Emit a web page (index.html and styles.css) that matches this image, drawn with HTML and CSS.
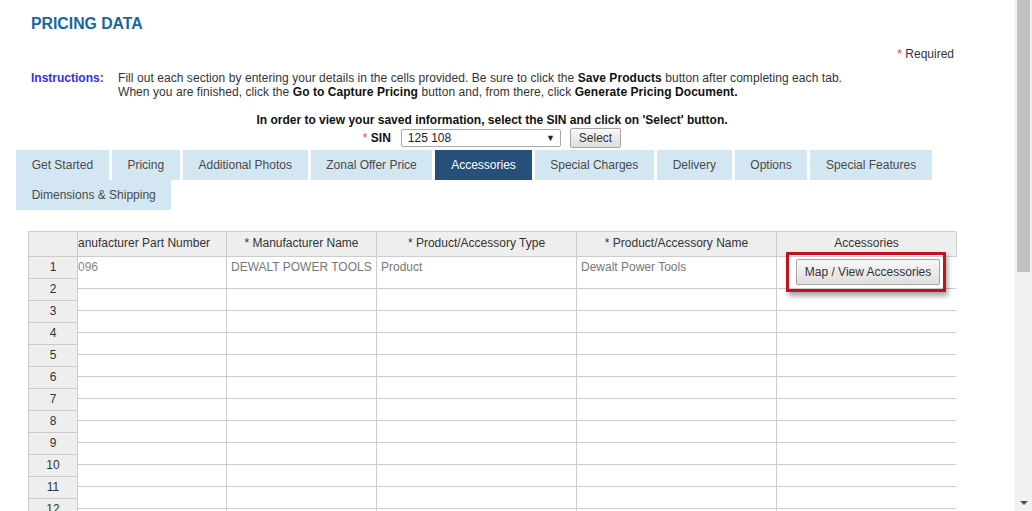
FILE: index.html
```html
<!DOCTYPE html>
<html lang="en">
<head>
<meta charset="utf-8">
<title>Pricing Data</title>
<link rel="stylesheet" href="styles.css">
</head>
<body>
<div class="page">
  <h1 class="title">PRICING DATA</h1>
  <p class="required"><span class="req">*</span> Required</p>
  <div class="instructions">
    <span class="label">Instructions:</span>
    <div class="text">Fill out each section by entering your details in the cells provided. Be sure to click the <b>Save Products</b> button after completing each tab.<br>When you are finished, click the <b>Go to Capture Pricing</b> button and, from there, click <b>Generate Pricing Document.</b></div>
  </div>
  <p class="lookup-note">In order to view your saved information, select the SIN and click on 'Select' button.</p>
  <div class="sin-row">
    <span class="sin-label"><span class="req">*</span> <b>SIN</b></span>
    <div class="select"><span>125 108</span><span class="caret">▼</span></div>
    <button class="btn select-btn" type="button">Select</button>
  </div>
  <nav class="tabs">
    <a class="tab">Get Started</a>
    <a class="tab">Pricing</a>
    <a class="tab">Additional Photos</a>
    <a class="tab">Zonal Offer Price</a>
    <a class="tab active">Accessories</a>
    <a class="tab">Special Charges</a>
    <a class="tab">Delivery</a>
    <a class="tab">Options</a>
    <a class="tab">Special Features</a>
    <a class="tab">Dimensions &amp; Shipping</a>
  </nav>
  <div class="sheet">
    <div class="rowhead">
      <div class="rh-cell corner"></div>
      <div class="rh-cell">1</div>
      <div class="rh-cell">2</div>
      <div class="rh-cell">3</div>
      <div class="rh-cell">4</div>
      <div class="rh-cell">5</div>
      <div class="rh-cell">6</div>
      <div class="rh-cell">7</div>
      <div class="rh-cell">8</div>
      <div class="rh-cell">9</div>
      <div class="rh-cell">10</div>
      <div class="rh-cell">11</div>
      <div class="rh-cell">12</div>
    </div>
    <div class="grid">
      <div class="hd clip"><span class="shift">* Manufacturer Part Number</span></div>
      <div class="hd">* Manufacturer Name</div>
      <div class="hd">* Product/Accessory Type</div>
      <div class="hd">* Product/Accessory Name</div>
      <div class="hd">Accessories</div>

      <div class="cd">096</div>
      <div class="cd">DEWALT POWER TOOLS</div>
      <div class="cd">Product</div>
      <div class="cd">Dewalt Power Tools</div>
      <div class="cd last action">
        <button class="btn map-btn" type="button">Map / View Accessories</button>
        <span class="highlight"></span>
      </div>

      <div class="cd"></div><div class="cd"></div><div class="cd"></div><div class="cd"></div><div class="cd last"></div>
      <div class="cd"></div><div class="cd"></div><div class="cd"></div><div class="cd"></div><div class="cd last"></div>
      <div class="cd"></div><div class="cd"></div><div class="cd"></div><div class="cd"></div><div class="cd last"></div>
      <div class="cd"></div><div class="cd"></div><div class="cd"></div><div class="cd"></div><div class="cd last"></div>
      <div class="cd"></div><div class="cd"></div><div class="cd"></div><div class="cd"></div><div class="cd last"></div>
      <div class="cd"></div><div class="cd"></div><div class="cd"></div><div class="cd"></div><div class="cd last"></div>
      <div class="cd"></div><div class="cd"></div><div class="cd"></div><div class="cd"></div><div class="cd last"></div>
      <div class="cd"></div><div class="cd"></div><div class="cd"></div><div class="cd"></div><div class="cd last"></div>
      <div class="cd"></div><div class="cd"></div><div class="cd"></div><div class="cd"></div><div class="cd last"></div>
      <div class="cd"></div><div class="cd"></div><div class="cd"></div><div class="cd"></div><div class="cd last"></div>
      <div class="cd"></div><div class="cd"></div><div class="cd"></div><div class="cd"></div><div class="cd last"></div>
    </div>
  </div>
</div>
<div class="scrollbar">
  <div class="thumb"></div>
  <div class="arrow-down"></div>
</div>
</body>
</html>
```

FILE: styles.css
```css
html, body {
  margin: 0;
  padding: 0;
  overflow: hidden;
  background: #fff;
}

body {
  font-family: "Liberation Sans", Arial, sans-serif;
  font-size: 12px;
  color: #333;
}

.page {
  width: 952px;
  margin-left: 16px;
}

.title {
  margin: 0 0 0 15px;
  padding-top: 14px;
  font-size: 15.8px;
  line-height: 20px;
  font-weight: bold;
  color: #17679f;
}

.required {
  margin: 13px 14px 0 0;
  text-align: right;
  line-height: 14px;
  color: #333;
}

.req {
  color: #e0393e;
}

.instructions {
  display: flex;
  margin: 10px 0 0 15px;
  line-height: 14px;
}

.instructions .label {
  width: 87px;
  flex: none;
  font-weight: bold;
  color: #3030ee;
}

.instructions .text {
  color: #333;
  letter-spacing: 0.06px;
}

.instructions b {
  color: #111;
}

.lookup-note {
  margin: 14px 0 0;
  text-align: center;
  font-weight: bold;
  line-height: 14px;
  color: #111;
}

.sin-row {
  display: flex;
  justify-content: center;
  align-items: center;
  height: 22px;
  margin-bottom: 1px;
}

.sin-label {
  margin-right: 10px;
  color: #111;
}

.select {
  display: flex;
  justify-content: space-between;
  align-items: center;
  box-sizing: border-box;
  width: 160px;
  height: 18px;
  padding: 0 5px 0 6px;
  border: 1px solid #a9a9a9;
  border-radius: 2px;
  background: #fff;
  color: #222;
  font-size: 12px;
}

.select .caret {
  font-size: 9px;
  color: #222;
}

.btn {
  box-sizing: border-box;
  font-family: "Liberation Sans", Arial, sans-serif;
  font-size: 12px;
  color: #333;
  border: 1px solid #a5a5a5;
  border-radius: 2px;
  background: linear-gradient(#f8f8f8, #dedede);
  cursor: pointer;
}

.select-btn {
  margin-left: 9px;
  height: 20px;
  padding: 0 8px;
}

.tabs {
  display: flex;
  flex-wrap: wrap;
  column-gap: 3px;
}

.tab {
  display: block;
  height: 30px;
  line-height: 30px;
  padding: 0 15.7px;
  background: #d3e7f3;
  color: #4a4a4a;
  font-size: 12px;
  white-space: nowrap;
}

.tab.active {
  background: #24507a;
  color: #fff;
}

.sheet {
  display: flex;
  align-items: flex-start;
  margin: 21px 0 0 12px;
}

.rowhead {
  width: 50px;
  box-sizing: border-box;
  border-left: 1px solid #ccc;
  border-top: 1px solid #ccc;
  display: grid;
  grid-template-rows: 25px repeat(12, 22px);
}

.rh-cell {
  box-sizing: border-box;
  border-right: 1px solid #ccc;
  border-bottom: 1px solid #ccc;
  background: #eee;
  text-align: center;
  line-height: 21px;
  color: #333;
}

.grid {
  display: grid;
  grid-template-columns: 149px 150px 200px 200px 179px;
  grid-template-rows: 25px 32px repeat(11, 22px);
  border-top: 1px solid #ccc;
}

.hd, .cd {
  box-sizing: border-box;
  border-right: 1px solid #ccc;
  border-bottom: 1px solid #ccc;
  white-space: nowrap;
  overflow: hidden;
}

.hd {
  background: #eee;
  text-align: center;
  line-height: 23px;
  color: #333;
}

.hd.clip {
  text-align: left;
}

.shift {
  display: inline-block;
  margin-left: -18px;
}

.cd {
  padding: 3px 4px 0;
  line-height: 14px;
  color: #777;
}

.grid .cd:nth-child(5n + 1) {
  padding-left: 0;
  color: #888;
}

.cd.last {
  border-right: none;
}

.grid .hd:nth-child(5) {
  margin-right: -1px;
}

.cd.action {
  position: relative;
  overflow: visible;
  padding: 2px 0 0 19px;
}

.map-btn {
  height: 26px;
  width: 144px;
  padding: 0;
  color: #333;
}

.highlight {
  position: absolute;
  left: 9px;
  top: -5px;
  width: 160px;
  height: 40px;
  box-sizing: border-box;
  border: 3px solid #c0131b;
  box-shadow: 2px 4px 5px rgba(0, 0, 0, 0.35);
  pointer-events: none;
}

.scrollbar {
  position: fixed;
  top: 0;
  right: 0;
  bottom: 0;
  width: 17px;
  background: #f1f1f1;
}

.thumb {
  position: absolute;
  left: 2px;
  top: 0;
  width: 13px;
  height: 272px;
  background: #c1c1c1;
}

.arrow-down {
  position: absolute;
  left: 5px;
  bottom: 6px;
  width: 0;
  height: 0;
  border-left: 4px solid transparent;
  border-right: 4px solid transparent;
  border-top: 4px solid #505050;
}
```
